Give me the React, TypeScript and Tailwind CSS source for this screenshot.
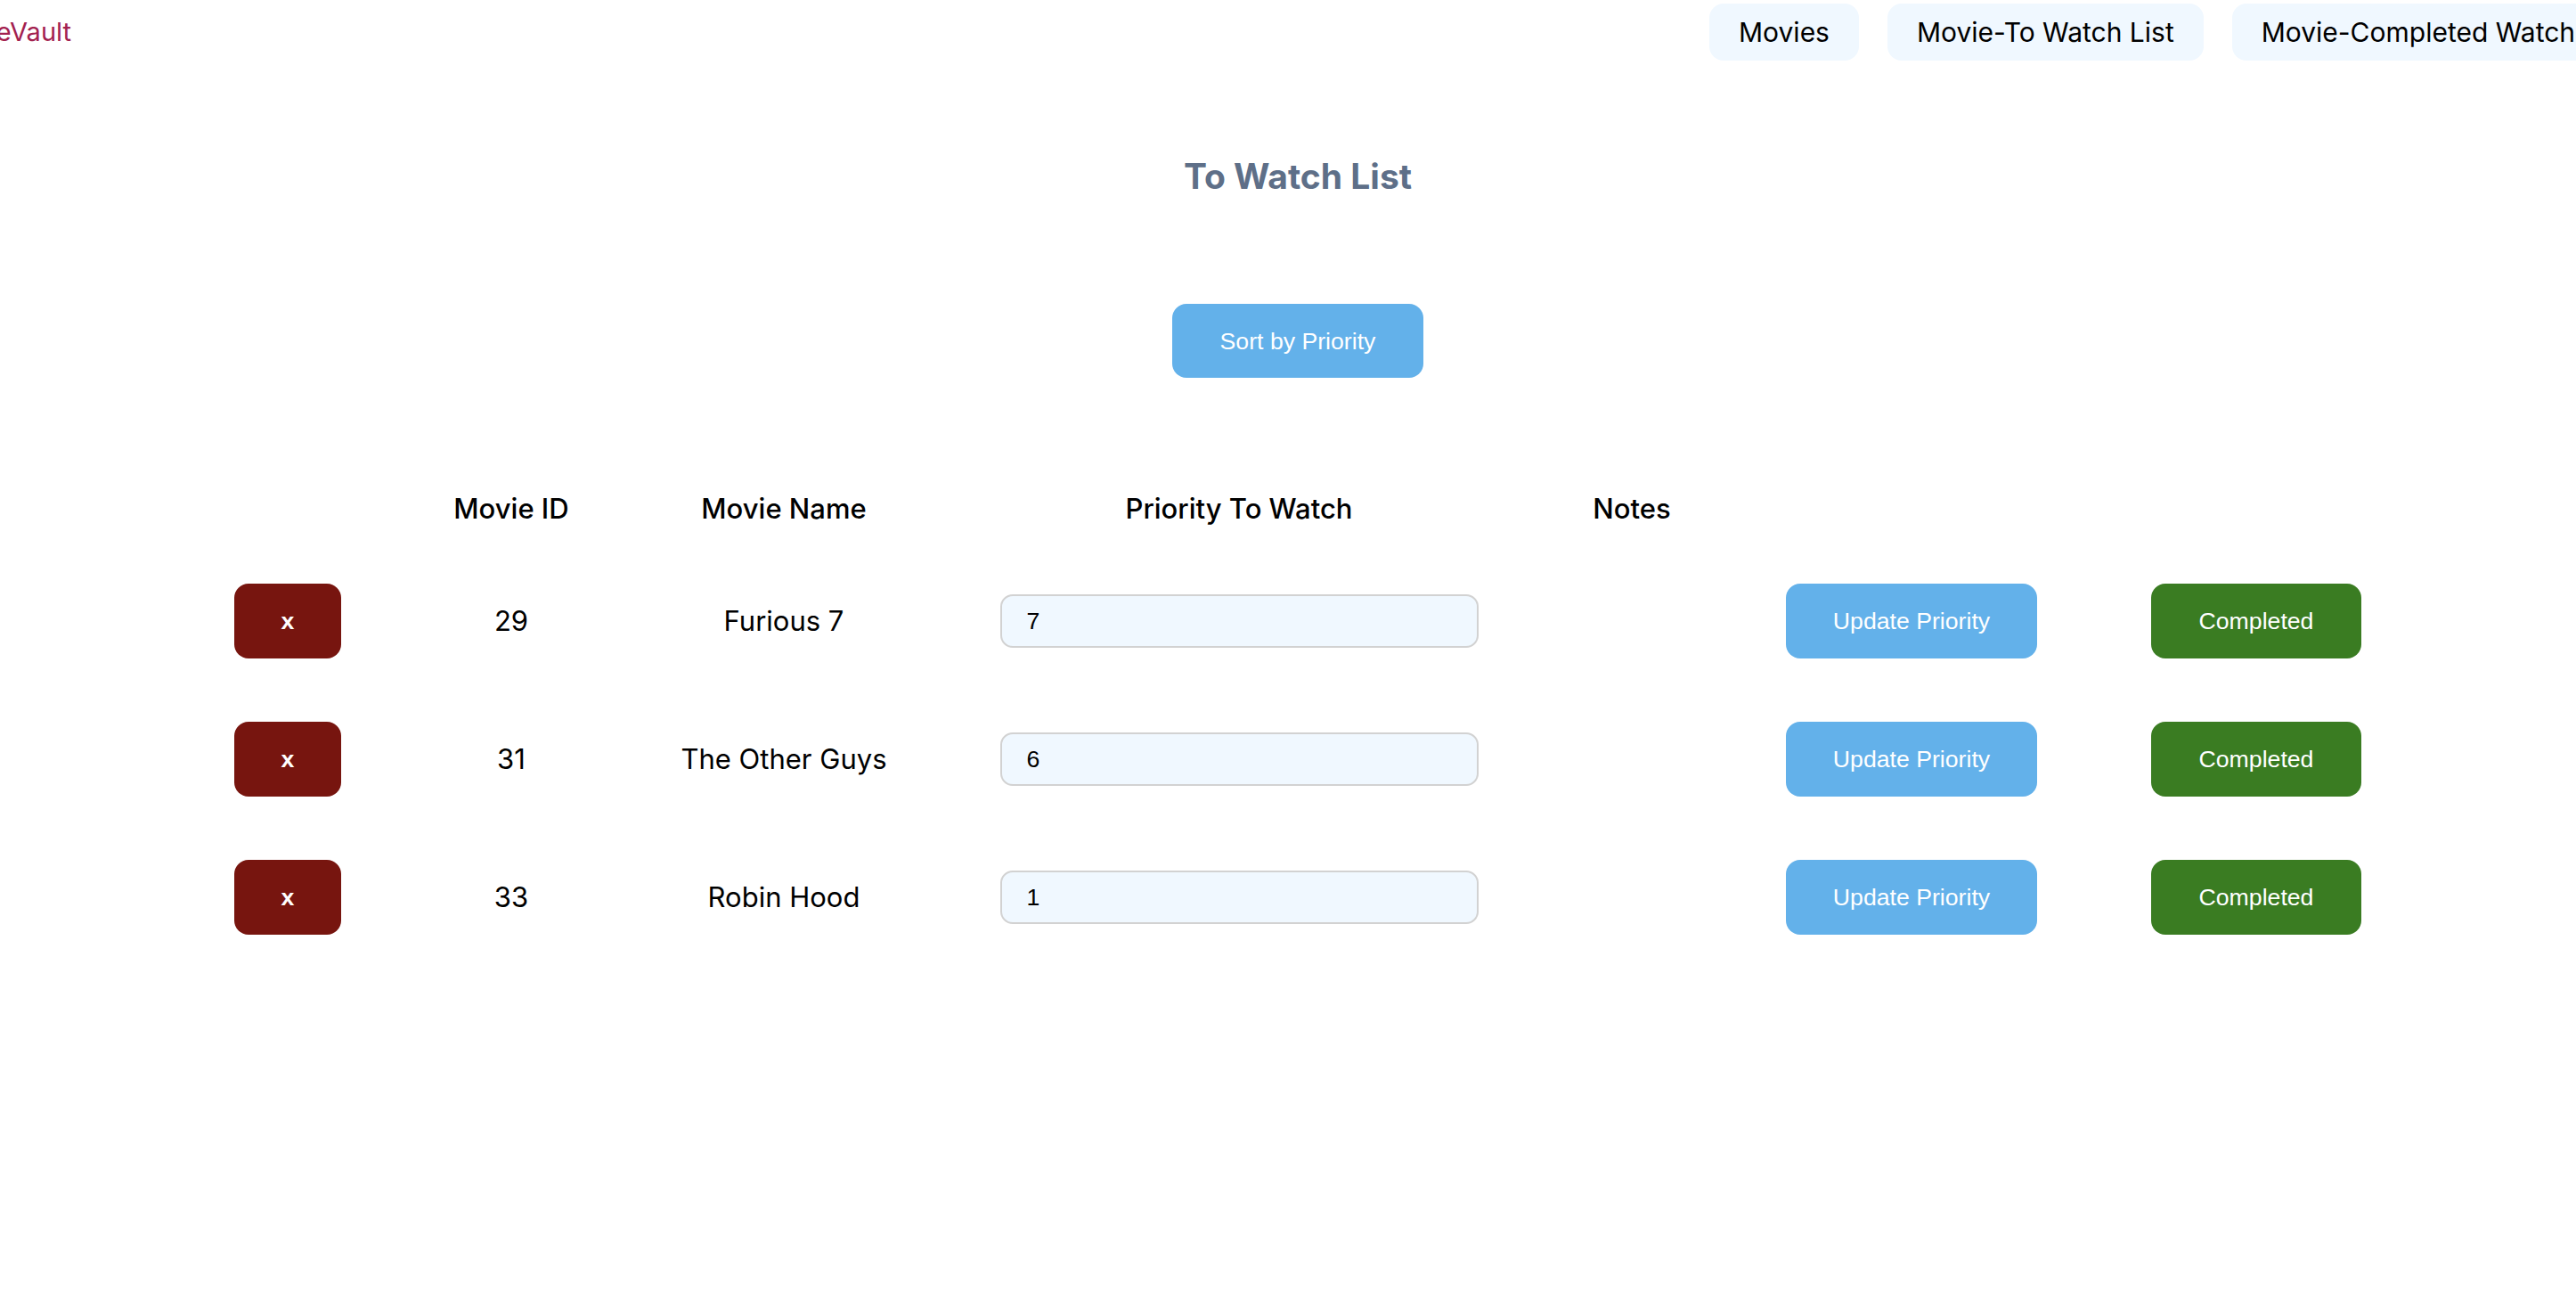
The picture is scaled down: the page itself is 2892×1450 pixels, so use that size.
import React, { useState } from 'react';

interface WatchItem {
  id: number;
  name: string;
  priority: string;
}

const initialItems: WatchItem[] = [
  { id: 29, name: 'Furious 7', priority: '7' },
  { id: 31, name: 'The Other Guys', priority: '6' },
  { id: 33, name: 'Robin Hood', priority: '1' },
];

const navLinks = ['Movies', 'Movie-To Watch List', 'Movie-Completed Watch List'];

const cols = 'grid grid-cols-[120px_382px_230px_792px_90px_538px_236px] items-center justify-items-center whitespace-nowrap';

const btnFont = { fontFamily: '"Liberation Sans", Arial, sans-serif' };

export default function App() {
  const [items, setItems] = useState<WatchItem[]>(initialItems);

  const setPriority = (id: number, value: string) => {
    setItems(prev => prev.map(i => (i.id === id ? { ...i, priority: value } : i)));
  };

  const sortByPriority = () => {
    setItems(prev => [...prev].sort((a, b) => Number(b.priority) - Number(a.priority)));
  };

  return (
    <div
      className="w-full min-h-screen bg-white overflow-hidden text-black"
      style={{ fontFamily: 'Inter, "Noto Sans", sans-serif' }}
    >
      {/* top nav - brand runs off the left edge like the original */}
      <header className="flex items-center h-[72px] py-[4px] whitespace-nowrap">
        <div className="shrink-0 w-[80px] flex justify-end overflow-hidden">
          <span className="text-[29px] text-[#a3214f]">MovieVault</span>
        </div>
        <nav className="flex shrink-0 gap-[32px] ml-[1839px]">
          {navLinks.map(link => (
            <a
              key={link}
              href="#"
              className="h-[64px] flex items-center px-[33px] rounded-2xl bg-[#f0f8ff] text-[30px] text-black"
            >
              {link}
            </a>
          ))}
        </nav>
      </header>

      <main className="flex flex-col items-center pl-[22px]">
        <h2 className="mt-[102px] text-[39px] leading-[48px] font-bold text-[#5e6f88]">To Watch List</h2>

        <button
          onClick={sortByPriority}
          className="mt-[119px] w-[282px] h-[83px] rounded-2xl bg-[#63b1ea] text-white text-[26.67px]"
          style={btnFont}
        >
          Sort by Priority
        </button>

        <div className="mt-[124px] flex flex-col">
          <div className={`${cols} h-[40px] text-[31px] font-medium`}>
            <span />
            <span>Movie ID</span>
            <span>Movie Name</span>
            <span>Priority To Watch</span>
            <span>Notes</span>
            <span />
            <span />
          </div>

          <div className="mt-[67px] flex flex-col gap-[71px]">
            {items.map(item => (
              <div key={item.id} className={`${cols} h-[84px] text-[31px]`}>
                <button
                  onClick={() => setItems(prev => prev.filter(i => i.id !== item.id))}
                  className="w-[120px] h-[84px] rounded-2xl bg-[#77150f] text-white text-[26.67px] font-bold"
                  style={btnFont}
                >
                  x
                </button>
                <span>{item.id}</span>
                <span>{item.name}</span>
                <input
                  type="text"
                  value={item.priority}
                  onChange={e => setPriority(item.id, e.target.value)}
                  className="w-[537px] h-[60px] pl-[28px] rounded-[14px] border-2 border-[#d2d2d2] bg-[#f0f8ff] text-[26.67px] text-black outline-none"
                  style={btnFont}
                />
                <span />
                <button
                  className="w-[282px] h-[84px] rounded-2xl bg-[#63b1ea] text-white text-[26.67px]"
                  style={btnFont}
                >
                  Update Priority
                </button>
                <button
                  className="w-[236px] h-[84px] rounded-2xl bg-[#3a7c22] text-white text-[26.67px]"
                  style={btnFont}
                >
                  Completed
                </button>
              </div>
            ))}
          </div>
        </div>
      </main>
    </div>
  );
}
